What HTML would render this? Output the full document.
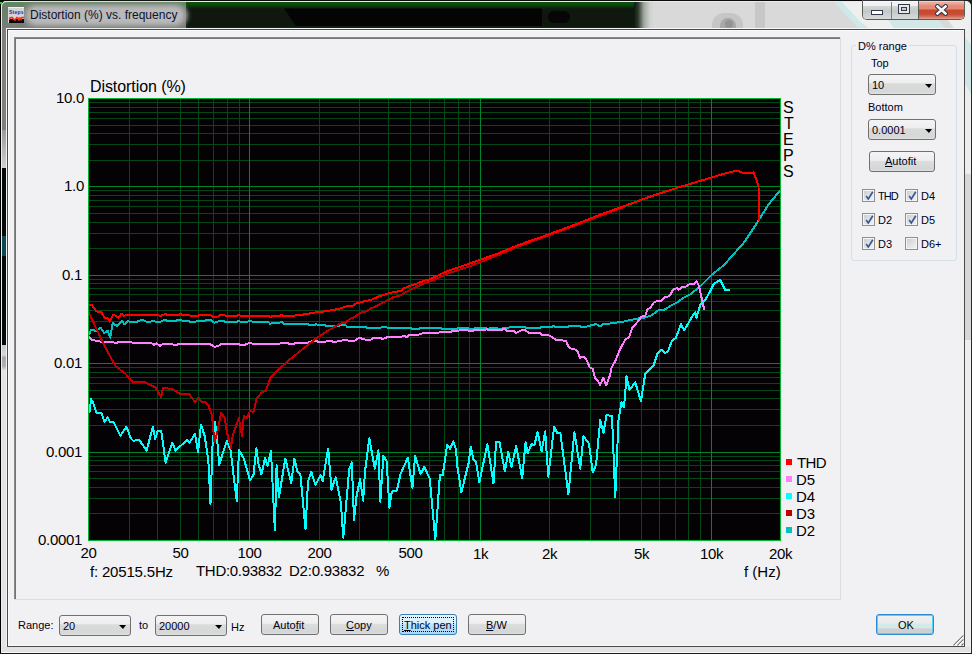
<!DOCTYPE html>
<html><head><meta charset="utf-8">
<style>
*{margin:0;padding:0;box-sizing:border-box}
html,body{width:972px;height:654px;overflow:hidden;background:#e9ebeb;font-family:"Liberation Sans",sans-serif}
.a{position:absolute}
.t{position:absolute;white-space:nowrap;line-height:1;color:#000}
.cl{font-size:15px}
.dl{font-size:11px;color:#000018}
.combo{position:absolute;border:1px solid #707070;border-radius:3px;background:linear-gradient(#f4f4f4 0,#eeeeee 42%,#d9dada 46%,#d6d7d7 90%,#e4e4e4 100%)}
.combo .arr{position:absolute;width:0;height:0;border-left:4px solid transparent;border-right:3.5px solid transparent;border-top:4px solid #000}
.btn{position:absolute;border:1px solid #707070;border-radius:3px;background:linear-gradient(#f4f4f4 0,#eeeeee 44%,#dcdddd 48%,#d4d5d5 90%,#e0e0e0 100%)}
.cb{position:absolute;width:13px;height:13px;border:1px solid #8e8f8f;box-shadow:inset 0 0 0 1px #f4f4f4;background:linear-gradient(135deg,#c8c9c9 0,#dedfdf 45%,#f4f4f4 100%)}
</style></head><body>
<!-- left frame -->
<div class="a" style="left:0;top:0;width:1px;height:654px;background:#000"></div>
<div class="a" style="left:1px;top:2px;width:1px;height:650px;background:#e8eeee"></div>
<div class="a" style="left:2px;top:28px;width:4px;height:102px;background:#7d807d"></div>
<div class="a" style="left:2px;top:130px;width:4px;height:38px;background:linear-gradient(#9a9a9a,#d0d0d0)"></div>
<div class="a" style="left:2px;top:168px;width:4px;height:177px;background:#060a08"></div>
<div class="a" style="left:2px;top:236px;width:4px;height:20px;background:#0a4a50"></div>
<div class="a" style="left:2px;top:345px;width:4px;height:25px;background:linear-gradient(#c8cccc 0,#d4d8d8 40%,#a8a8ac 50%,#b0b0b4 85%,#dcdede 100%)"></div>
<div class="a" style="left:2px;top:370px;width:4px;height:282px;background:#e3e5e5"></div>
<!-- right frame -->
<div class="a" style="left:965px;top:20px;width:6px;height:632px;background:#eceeee"></div>
<svg class="a" style="left:965px;top:38px" width="6" height="58"><polygon points="0,0 6,6 6,56 0,46" fill="#cfe6e6"/></svg>
<div class="a" style="left:965px;top:174px;width:6px;height:166px;background:#d6d8d8"></div>
<div class="a" style="left:971px;top:8px;width:1px;height:646px;background:#2a2a2a"></div>
<!-- bottom frame -->
<div class="a" style="left:2px;top:647px;width:968px;height:5px;background:#e0e2e2"></div>
<div class="a" style="left:2px;top:652px;width:968px;height:1px;background:#fafafa"></div>
<div class="a" style="left:0;top:653px;width:972px;height:1px;background:#1a1a1a"></div>

<!-- title bar -->
<div class="a" style="left:0;top:0;width:972px;height:1px;background:#0a0a0a"></div>
<div class="a" style="left:2px;top:1px;width:966px;height:1px;background:#e2eeee"></div>
<div class="a" style="left:2px;top:2px;width:188px;height:26px;background:linear-gradient(#5f8a5f 0,#6a7e6a 25%,#7a7d7a 100%)"></div>
<div class="a" style="left:186px;top:2px;width:452px;height:26px;background:linear-gradient(#0f4f0f 0,#0a4a0a 10%,#0b3a0b 16%,#0f1f0f 24%,#0f170f 32%,#0f170f 90%,#0e2a0e 100%)"></div>
<svg class="a" style="left:280px;top:8px" width="270" height="20"><polygon points="4,0.5 261,0.5 262,2 262,18 16,18" fill="#040404"/></svg>
<div class="a" style="left:548px;top:11px;width:22px;height:12px;background:#060606;border-radius:6px"></div>
<div class="a" style="left:634px;top:2px;width:20px;height:26px;background:linear-gradient(90deg,#111811 0,#2a3a2a 20%,#a0a8a0 50%,#cfd2cf 80%,#d8d9d8 100%)"></div>
<div class="a" style="left:654px;top:2px;width:310px;height:26px;background:#d8d9d8"></div>
<div class="a" style="left:712px;top:13px;width:31px;height:15px;background:#c6c6c6;border-radius:12px 12px 0 0"></div>
<div class="a" style="left:720px;top:18px;width:16px;height:10px;background:#a8a8a8;border-radius:8px 8px 0 0"></div>
<div class="a" style="left:725px;top:20px;width:8px;height:8px;background:#949494;border-radius:4px"></div>
<div class="a" style="left:755px;top:2px;width:10px;height:26px;background:#c6c7c6"></div>
<svg class="a" style="left:820px;top:2px" width="150" height="26"><polygon points="14,0 150,0 150,26 48,26" fill="#eef0f0"/><polygon points="14,0 22,0 46,26 38,26" fill="#cfe8e8"/><polygon points="68,18 118,18 124,26 74,26" fill="#d2e8e8"/><polygon points="118,18 128,18 134,26 124,26" fill="#d8dada"/></svg>
<!-- title glow -->
<div class="a" style="left:22px;top:4px;width:166px;height:23px;border-radius:11px;background:#8e908e;filter:blur(2px)"></div>
<div class="a" style="left:27px;top:6px;width:157px;height:19px;border-radius:9px;background:#b8b9b8;filter:blur(2px)"></div>
<!-- icon -->
<div class="a" style="left:8px;top:7px;width:16px;height:16px;background:#d4d4d6;border-top:1px solid #f2f2f2"></div>
<div class="t" style="left:9px;top:10px;font-size:5px;color:#2a2a9a;font-weight:bold;letter-spacing:0.2px">Steps</div>
<div class="a" style="left:9px;top:19px;width:15px;height:4px;background:#0a0a0a"></div>
<svg class="a" style="left:9px;top:16px" width="15" height="5"><path d="M0 4 L1 2 L3 1.5 L5 3.5 L6 4 L8 1.5 L9 2 L10 4 L11 2 L12 3.5 L13 1.5 L15 1.5" stroke="#ff2a10" stroke-width="1.6" fill="none"/></svg>
<div class="t" style="left:30px;top:9px;font-size:12px;color:#101030">Distortion (%) vs. frequency</div>
<!-- caption buttons -->
<div class="a" style="left:862px;top:0;width:103px;height:20px;border:1px solid #5a5a5a;border-top:none;border-radius:0 0 5px 5px;overflow:hidden">
  <div class="a" style="left:0;top:0;width:28px;height:19px;background:linear-gradient(#f2f2f4 0,#f0f0f2 30%,#d4d6d6 34%,#c4c8c8 60%,#d0d2d2 80%,#d8dada 100%)"></div>
  <div class="a" style="left:28px;top:0;width:1px;height:19px;background:#808080"></div>
  <div class="a" style="left:29px;top:0;width:26px;height:19px;background:linear-gradient(#f2f2f4 0,#f0f0f2 30%,#d4d6d6 34%,#c4c8c8 60%,#d0d2d2 80%,#d8dada 100%)"></div>
  <div class="a" style="left:55px;top:0;width:1px;height:19px;background:#5a5a5a"></div>
  <div class="a" style="left:56px;top:0;width:46px;height:19px;background:linear-gradient(#eab4a4 0,#e9a898 20%,#e68a78 30%,#e48870 48%,#c84830 52%,#c84c34 75%,#d07a68 90%,#eca090 100%)"></div>
  <div class="a" style="left:8px;top:10px;width:12px;height:5px;border:1px solid #33384a;background:#fff"></div>
  <div class="a" style="left:35px;top:4px;width:12px;height:10px;border:1px solid #33384a;background:#e8e8e8"><div class="a" style="left:2px;top:2px;width:6px;height:4px;border:1px solid #33384a;background:#ccc"></div></div>
  <svg class="a" style="left:72px;top:4px" width="13" height="12"><path d="M2.5 2.5 L10.5 9.5 M10.5 2.5 L2.5 9.5" stroke="#2e3444" stroke-width="4.6" stroke-linecap="square"/><path d="M2.5 2.5 L10.5 9.5 M10.5 2.5 L2.5 9.5" stroke="#f6f6f6" stroke-width="2.6" stroke-linecap="square"/></svg>
  <div class="a" style="left:0;top:0;width:103px;height:1px;background:#303438"></div>
  <div class="a" style="left:0;top:1px;width:55px;height:1px;background:#fafafa"></div>
  <div class="a" style="left:56px;top:1px;width:46px;height:1px;background:#f6d0c0"></div>
</div>

<!-- client area -->
<div class="a" style="left:6px;top:28px;width:959px;height:1px;background:rgba(255,255,255,0.65)"></div>
<div class="a" style="left:6px;top:28px;width:1px;height:619px;background:#f4f6f6"></div>
<div class="a" style="left:7px;top:29px;width:958px;height:618px;background:#4a4a4a"></div>
<div class="a" style="left:8px;top:30px;width:956px;height:616px;background:#fbfbfd"></div>
<div class="a" style="left:9px;top:31px;width:955px;height:614px;background:#f1f0f3"></div>

<!-- chart panel (sunken) -->
<div class="a" style="left:14px;top:37px;width:827px;height:563px;background:#dcdedd"></div>
<div class="a" style="left:14px;top:37px;width:826px;height:562px;background:#8a8a8a"></div>
<div class="a" style="left:15px;top:38px;width:825px;height:561px;background:#747474"></div>
<div class="a" style="left:16px;top:39px;width:824px;height:560px;background:#f1f0f3"></div>

<svg width="972" height="654" style="position:absolute;left:0;top:0">
<defs><clipPath id="clip"><rect x="89" y="99" width="691" height="441"/></clipPath></defs>
<g shape-rendering="crispEdges"><rect x="88" y="98" width="693" height="443" fill="#050206"/><rect x="88" y="160" width="692" height="1" fill="#034816"/><rect x="88" y="144" width="692" height="1" fill="#034816"/><rect x="88" y="133" width="692" height="1" fill="#034816"/><rect x="88" y="125" width="692" height="1" fill="#034816"/><rect x="88" y="118" width="692" height="1" fill="#034816"/><rect x="88" y="112" width="692" height="1" fill="#034816"/><rect x="88" y="107" width="692" height="1" fill="#034816"/><rect x="88" y="102" width="692" height="1" fill="#034816"/><rect x="88" y="248" width="692" height="1" fill="#034816"/><rect x="88" y="233" width="692" height="1" fill="#034816"/><rect x="88" y="222" width="692" height="1" fill="#034816"/><rect x="88" y="213" width="692" height="1" fill="#034816"/><rect x="88" y="206" width="692" height="1" fill="#034816"/><rect x="88" y="200" width="692" height="1" fill="#034816"/><rect x="88" y="195" width="692" height="1" fill="#034816"/><rect x="88" y="190" width="692" height="1" fill="#034816"/><rect x="88" y="337" width="692" height="1" fill="#034816"/><rect x="88" y="321" width="692" height="1" fill="#034816"/><rect x="88" y="310" width="692" height="1" fill="#034816"/><rect x="88" y="301" width="692" height="1" fill="#034816"/><rect x="88" y="294" width="692" height="1" fill="#034816"/><rect x="88" y="288" width="692" height="1" fill="#034816"/><rect x="88" y="283" width="692" height="1" fill="#034816"/><rect x="88" y="279" width="692" height="1" fill="#034816"/><rect x="88" y="425" width="692" height="1" fill="#034816"/><rect x="88" y="409" width="692" height="1" fill="#034816"/><rect x="88" y="398" width="692" height="1" fill="#034816"/><rect x="88" y="390" width="692" height="1" fill="#034816"/><rect x="88" y="383" width="692" height="1" fill="#034816"/><rect x="88" y="377" width="692" height="1" fill="#034816"/><rect x="88" y="372" width="692" height="1" fill="#034816"/><rect x="88" y="367" width="692" height="1" fill="#034816"/><rect x="88" y="513" width="692" height="1" fill="#034816"/><rect x="88" y="498" width="692" height="1" fill="#034816"/><rect x="88" y="487" width="692" height="1" fill="#034816"/><rect x="88" y="478" width="692" height="1" fill="#034816"/><rect x="88" y="471" width="692" height="1" fill="#034816"/><rect x="88" y="465" width="692" height="1" fill="#034816"/><rect x="88" y="460" width="692" height="1" fill="#034816"/><rect x="88" y="456" width="692" height="1" fill="#034816"/><rect x="129" y="98" width="1" height="442" fill="#034816"/><rect x="157" y="98" width="1" height="442" fill="#034816"/><rect x="180" y="98" width="1" height="442" fill="#034816"/><rect x="198" y="98" width="1" height="442" fill="#034816"/><rect x="213" y="98" width="1" height="442" fill="#034816"/><rect x="227" y="98" width="1" height="442" fill="#034816"/><rect x="239" y="98" width="1" height="442" fill="#034816"/><rect x="319" y="98" width="1" height="442" fill="#034816"/><rect x="359" y="98" width="1" height="442" fill="#034816"/><rect x="388" y="98" width="1" height="442" fill="#034816"/><rect x="410" y="98" width="1" height="442" fill="#034816"/><rect x="429" y="98" width="1" height="442" fill="#034816"/><rect x="444" y="98" width="1" height="442" fill="#034816"/><rect x="458" y="98" width="1" height="442" fill="#034816"/><rect x="469" y="98" width="1" height="442" fill="#034816"/><rect x="549" y="98" width="1" height="442" fill="#034816"/><rect x="590" y="98" width="1" height="442" fill="#034816"/><rect x="619" y="98" width="1" height="442" fill="#034816"/><rect x="641" y="98" width="1" height="442" fill="#034816"/><rect x="659" y="98" width="1" height="442" fill="#034816"/><rect x="675" y="98" width="1" height="442" fill="#034816"/><rect x="688" y="98" width="1" height="442" fill="#034816"/><rect x="700" y="98" width="1" height="442" fill="#034816"/><rect x="88" y="186" width="692" height="1" fill="#00852a"/><rect x="88" y="275" width="692" height="1" fill="#00852a"/><rect x="88" y="363" width="692" height="1" fill="#00852a"/><rect x="88" y="452" width="692" height="1" fill="#00852a"/><rect x="249" y="98" width="1" height="442" fill="#00852a"/><rect x="480" y="98" width="1" height="442" fill="#00852a"/><rect x="711" y="98" width="1" height="442" fill="#00852a"/><rect x="88.5" y="98.5" width="692" height="442" fill="none" stroke="#00b432" stroke-width="1"/></g><g clip-path="url(#clip)" shape-rendering="crispEdges"><polyline points="89.2,334.4 91,329.9 96.1,330.8 100.7,327.6 104.3,333.1 107.6,330.8 110.3,337.7 112.6,323 117.2,326.2 121.8,320.7 124.5,324.4 127.7,321.1 131.9,322.1 137.4,321.6 142,319.6 147.5,322.1 153.9,321.1 157,322 160,322 165.1,319.6 167.4,321.1 175.7,321.1 177.6,319.9 181.3,319.9 183.1,321.1 188.7,321.1 190.6,322 195.2,322 196.6,321.1 204.4,321.1 206.3,319.9 210.5,319.9 214.2,322.7 216.5,322.2 219.3,321.1 223.9,321.1 225.7,322 236.9,322 238.7,320.8 240.6,322 247,322 250,320.8 252,321.5 268.1,321.5 270.4,324 272.2,322.9 279.6,322.9 281.5,321.6 284.3,324 308.3,324 309.3,325.2 314.8,325.2 316.2,323.8 318.1,325.2 325,325.2 325.9,326.1 337,326.1 340,325.6 344.9,324.4 347.3,326.9 365.7,326.9 367.5,328.1 380.4,328.1 382.2,326.5 385.9,326.5 387.7,328.1 410.9,328.1 412.8,329.3 418.3,329.3 420.1,327.7 430,327.8 441.1,327.8 442,329 456.9,329 457.8,327.8 467.5,327.8 468.4,329 473.5,329 474.4,328.5 480,327.8 485.6,327.8 487.4,329 491.1,327.8 496.7,327.8 497.6,329 502.2,329 503.1,327.8 520,326.9 525.5,326.9 526.1,328.1 540.2,328.1 541.4,326.9 551.8,326.9 553.3,325.7 554.8,326.9 568.3,326.9 569.5,325.7 579.9,325.7 581.1,326.9 586.6,326.9 587.9,325.7 593.4,325.3 594.6,324.4 597,324.4 598.9,325.9 601.3,325.7 603.8,323.7 610,323.5 622.9,321.7 632.1,319.7 639.8,318.2 644.3,317.7 652,315.1 658.1,310.5 664.2,309.8 671.9,304.9 676.5,302.9 682.6,298.3 690,294.5 699,287.5 711.5,275 724,265 744,242.5 756.5,223.75 769,203.75 779.5,191.25" fill="none" stroke="#00c0c0" stroke-width="2" stroke-linejoin="round" stroke-linecap="round"/><polyline points="89.2,337.2 92.4,340 102.5,342 113.5,342.2 115.4,343.2 119,342 131,342 133.7,343.4 141,342.7 151.1,342.7 153.9,345 156.6,343.4 160,345.8 162.8,344 172,344 173.9,345.2 176.7,345.2 178.5,344 210,344 214.6,347 219.3,345.4 221.1,344 238.7,344 240.6,345.2 244.3,345.2 246.1,344 250,342.8 253.7,344 279.6,344 280.6,342.8 288,342.8 288.9,344 294.4,344 295.4,342.8 308.3,342.8 310.2,341.6 316.7,340.9 318.5,342.1 325,342.1 326.9,340.9 331.5,340.9 333.3,342.1 340,340.9 344.9,339.9 349.8,340.9 354.7,340.7 359,337.9 363.8,339.1 366.9,339.9 370.6,339.7 373.6,337.9 380.4,337.9 382.8,339.1 387.7,337 401.1,337 403.6,335.8 406.6,337 409.7,334.8 418.3,334.8 420.7,333.6 430,332.7 438.8,332.7 439.7,331.8 450.8,331.8 451.8,330.8 458.7,330.8 460.1,329.7 467,329.7 468.4,330.8 473.5,330.8 474.4,329.7 485.6,329.7 486.9,328.7 487.9,329.7 502.2,329.7 504.1,328.5 506.4,330.8 513.8,330.8 516.1,333.1 518.4,331.8 520,330.8 524.3,329.6 528.6,332.6 540.2,332.6 542,335.1 548.7,335.4 551.8,336.9 556.7,340.3 565.9,340.6 568.3,346.7 571.4,348.9 574.4,348.9 577.5,351.6 579.9,357.7 584.2,356.5 587.3,361.4 589.7,367.5 592.8,368.7 595.2,378.5 597.6,380.3 600.1,385.2 603.2,377.9 606.2,385.2 610,375.4 611.5,367.9 615.3,361 619.9,349.5 625.2,339.6 629.1,337.3 632.1,328.1 638.2,321.2 641.3,316.6 645.1,315.9 647.4,309.8 650.5,307.5 653.5,302.9 658.1,300.6 661.9,300.6 664.2,297.5 669.6,296 673.4,289.1 677.2,288.3 678.7,289.9 682.6,286.5 686.4,286.5 688.7,284.5 694,283.75 696.5,281.25 699,286.25 704,308.75" fill="none" stroke="#ff80ff" stroke-width="2" stroke-linejoin="round" stroke-linecap="round"/><polyline points="89.5,412 91.1,399.2 92.9,402.2 96.6,413.2 99.6,412.6 101.4,413.2 104.5,421.8 107.6,417.5 110,421.8 113.7,422.4 120.4,435.8 126.5,426.7 130.8,438.3 133.2,440.7 139.3,440.1 146.7,450.5 152.8,426.7 155.2,438.9 157.7,431 161.3,431 165.6,462.7 172.4,442.6 175.4,450.5 187,440.1 189.5,442.6 195,434 198,452.3 201,424.6 204.7,436.2 208.3,460 210.5,503.75 212.6,443.6 215,421.6 217.5,443.6 219.25,465 223,452.5 226.75,441 230.5,450 236.75,501 239,450 244,459 250,480.4 253.4,475.4 256.4,448.5 258.4,463.6 261.4,474.5 265.1,457.7 267.6,466.1 271,451 273.5,503.1 274.9,530 276.6,465.3 278.9,497.2 285.3,458.6 291.2,482.9 294.5,458.6 297.1,471.2 300.4,474.5 305.5,529.2 308,481.3 311.3,472 315.5,484.6 320.6,475.4 322.6,481.3 328.2,448.5 331.5,489.7 335.7,477.1 340.8,502.3 343.3,537.6 349.2,469.5 351.8,462.2 354,520 356.4,497.1 360.1,478.7 363.2,500.7 365,471.4 369.3,438.3 374.8,468.6 378.4,450.3 380.3,501.7 383.4,455.8 386.7,461.3 389.4,508.1 391.8,491.6 396.8,490.6 400.5,474.1 407.8,457.6 412.4,487.9 415.1,455.8 420.6,474.1 424.3,466.8 429.8,478.7 435.3,540 439.9,475 442.7,475 447.2,444.8 450,448.8 453.3,441.4 456,449.4 457.4,466.8 461.4,492.2 468.7,462.8 470.7,446.7 473.4,459.5 476.1,462.1 479.4,482.2 487.4,444.1 493.5,483.5 496.1,442.1 499.5,442.1 504.8,471.5 508.2,452.1 511.5,466.8 516.2,446.1 522.2,478.2 525.6,442.1 527.6,453.4 531.6,444.1 534.3,445.4 537.6,432 541.6,451.4 545.2,431.4 548.3,476.8 554.1,426.7 557,432.7 560.3,432.7 568.4,494.2 574.4,432 580.25,468.75 583.5,436.25 589,443.75 592.75,472.5 596,465 600.25,420 603.5,432.5 606.5,415 612,416.25 615.25,497.5 618.5,420 621.5,402.5 624,407.5 626.5,376.25 629.5,390 635.25,382.5 641,401.25 645.25,373.75 651.2,367.9 653.5,365.6 657.3,354.1 661.2,349.5 665,353.3 668,351 671.9,341.1 675.7,338 681,324.3 684.1,330.4 688.7,322.8 691.5,317.5 695.25,312.5 696.5,317.5 700.25,305 705.25,300 711.5,288.75 714,283.75 720.25,280 725.25,290 729,290" fill="none" stroke="#00ffff" stroke-width="2" stroke-linejoin="round" stroke-linecap="round"/><polyline points="89,313 100.5,337.5 108,352.5 115.5,366 125.5,374 133,382 145.5,382.5 155.5,387.5 161,397 163,387.5 173,389.5 180.5,394 189,394 194.9,402 198.6,397.7 201.6,402 204.7,402 208.3,405 212,415.5 214.5,442.4 217.5,431.4 221.2,413 224.8,418 226.7,431.4 231,447.9 232.8,435 238.9,418 242,436.2 243.8,415.5 246.9,418 249.9,411.2 253.6,411.8 256.6,398.3 262.1,392.2 265.8,391 270.5,377.5 278,370 288,361 299,352 314.8,339.5 324.1,333 340,323.8 345.5,322.6 349.8,318.9 354.7,317.1 360.2,312.8 365.7,311.6 370.6,308.5 376.7,306.1 382.8,302.4 388.9,300 392.6,297.5 401.1,295.1 406,292 413.4,288.3 425.6,282.8 430,281.6 447.5,273.6 475,264.4 498,255.2 518.5,246.5 543.5,237.4 574,226 600,216 624,207" fill="none" stroke="#c00000" stroke-width="2" stroke-linejoin="round" stroke-linecap="round"/><polyline points="89.2,304.6 91.5,304.6 96.6,311.5 101.1,312 104.3,317.5 107.6,318.4 109.9,321.6 113.1,314.7 115.4,315.6 118.6,317.9 121.3,313.8 124.1,316.1 126.4,314.7 157.6,314.7 160,316.2 165.1,313.9 167.4,315 178.5,315 180.4,313.9 182.2,314.8 188.7,314.8 190.6,315.9 198,315.9 199.8,314.8 210,314.8 212.8,316.9 217.4,316.9 220.6,314.8 223.9,314.8 225.7,315.9 236.9,315.9 238.7,314.6 240.6,315.9 250,315.9 268.1,315.9 270.4,317.1 272.2,315.9 279.6,315.9 281.5,314.8 283.3,315.9 294.4,315.9 296.3,314.8 302.8,314.8 304.6,313.8 309.3,313.8 311.1,312.7 314.8,312.7 316.7,311.7 323.1,311.7 325,310.6 329.6,310.6 331.5,309.7 335.2,309.7 337,308.8 340,308.5 347.3,306.1 353.5,305.5 355.9,303.6 364.5,301.2 370.6,300 379.1,296.3 388.9,293.2 401.1,290.8 403.6,288.3 413.4,284.7 425.6,280.4 430,279.2 447.5,271 475,261.7 498,253.4 518.5,245 543.5,236.25 574,225 599,215 624,206.25 649,197 674,188.75 699,181.25 724,173.75 734,171.25 739,171.25 744,173.25 753.5,172.5 756,178.75 758.5,186.25 759,220" fill="none" stroke="#ff0000" stroke-width="2" stroke-linejoin="round" stroke-linecap="round"/></g>
</svg>

<!-- chart texts -->
<div class="t" style="left:90px;top:79px;font-size:16px;letter-spacing:-0.08px;font-weight:400;color:#000">Distortion (%)</div>
<div class="t" style="left:56px;top:90px;font-size:15px;letter-spacing:-0.3px;font-weight:400;color:#000">10.0</div>
<div class="t" style="left:64px;top:178px;font-size:15px;letter-spacing:-0.3px;font-weight:400;color:#000">1.0</div>
<div class="t" style="left:62px;top:267px;font-size:15px;letter-spacing:-0.3px;font-weight:400;color:#000">0.1</div>
<div class="t" style="left:54px;top:355px;font-size:15px;letter-spacing:-0.3px;font-weight:400;color:#000">0.01</div>
<div class="t" style="left:46px;top:444px;font-size:15px;letter-spacing:-0.3px;font-weight:400;color:#000">0.001</div>
<div class="t" style="left:38px;top:532px;font-size:15px;letter-spacing:-0.3px;font-weight:400;color:#000">0.0001</div>
<div class="t" style="left:80.5px;top:545px;font-size:15px;letter-spacing:-0.3px;font-weight:400;color:#000">20</div>
<div class="t" style="left:172.5px;top:545px;font-size:15px;letter-spacing:-0.3px;font-weight:400;color:#000">50</div>
<div class="t" style="left:237.5px;top:545px;font-size:15px;letter-spacing:-0.3px;font-weight:400;color:#000">100</div>
<div class="t" style="left:307.5px;top:545px;font-size:15px;letter-spacing:-0.3px;font-weight:400;color:#000">200</div>
<div class="t" style="left:398.5px;top:545px;font-size:15px;letter-spacing:-0.3px;font-weight:400;color:#000">500</div>
<div class="t" style="left:473px;top:546px;font-size:15px;letter-spacing:-0.3px;font-weight:400;color:#000">1k</div>
<div class="t" style="left:542px;top:546px;font-size:15px;letter-spacing:-0.3px;font-weight:400;color:#000">2k</div>
<div class="t" style="left:634px;top:546px;font-size:15px;letter-spacing:-0.3px;font-weight:400;color:#000">5k</div>
<div class="t" style="left:700px;top:546px;font-size:15px;letter-spacing:-0.3px;font-weight:400;color:#000">10k</div>
<div class="t" style="left:769px;top:546px;font-size:15px;letter-spacing:-0.3px;font-weight:400;color:#000">20k</div>
<div class="t" style="left:90px;top:564px;font-size:15px;letter-spacing:-0.18px;font-weight:400;color:#000">f: 20515.5Hz</div>
<div class="t" style="left:196px;top:563px;font-size:15px;letter-spacing:-0.3px;font-weight:400;color:#000">THD:0.93832</div>
<div class="t" style="left:289px;top:563px;font-size:15px;letter-spacing:-0.22px;font-weight:400;color:#000">D2:0.93832</div>
<div class="t" style="left:376px;top:563px;font-size:15px;letter-spacing:0px;font-weight:400;color:#000">%</div>
<div class="t" style="left:744px;top:564px;font-size:15px;letter-spacing:0px;font-weight:400;color:#000">f (Hz)</div>
<div class="t" style="left:783px;top:100px;font-size:16px;letter-spacing:0px;font-weight:400;color:#000">S</div>
<div class="t" style="left:784px;top:116px;font-size:16px;letter-spacing:0px;font-weight:400;color:#000">T</div>
<div class="t" style="left:783px;top:132px;font-size:16px;letter-spacing:0px;font-weight:400;color:#000">E</div>
<div class="t" style="left:783px;top:148px;font-size:16px;letter-spacing:0px;font-weight:400;color:#000">P</div>
<div class="t" style="left:783px;top:164px;font-size:16px;letter-spacing:0px;font-weight:400;color:#000">S</div>
<div class="t" style="left:797px;top:455px;font-size:15px;letter-spacing:-0.6px;font-weight:400;color:#000">THD</div>
<div class="t" style="left:796px;top:472px;font-size:15px;letter-spacing:0px;font-weight:400;color:#000">D5</div>
<div class="t" style="left:796px;top:489px;font-size:15px;letter-spacing:0px;font-weight:400;color:#000">D4</div>
<div class="t" style="left:796px;top:506px;font-size:15px;letter-spacing:0px;font-weight:400;color:#000">D3</div>
<div class="t" style="left:796px;top:523px;font-size:15px;letter-spacing:0px;font-weight:400;color:#000">D2</div>
<div class="a" style="left:786px;top:459px;width:6px;height:6px;background:#ff0000"></div>
<div class="a" style="left:786px;top:476px;width:6px;height:6px;background:#ff80ff"></div>
<div class="a" style="left:786px;top:493px;width:6px;height:6px;background:#00ffff"></div>
<div class="a" style="left:786px;top:510px;width:6px;height:6px;background:#c00000"></div>
<div class="a" style="left:786px;top:527px;width:6px;height:6px;background:#00c0c0"></div>
<!-- checkboxes -->
<div class="cb" style="left:862px;top:189px"><svg class="a" style="left:1px;top:0px" width="11" height="11"><path d="M2.2 6 L4.3 9 L8.8 1.8" stroke="#3a5896" stroke-width="1.7" fill="none"/></svg></div><div class="t dl" style="left:878px;top:191px;letter-spacing:-0.9px">THD</div>
<div class="cb" style="left:905px;top:189px"><svg class="a" style="left:1px;top:0px" width="11" height="11"><path d="M2.2 6 L4.3 9 L8.8 1.8" stroke="#3a5896" stroke-width="1.7" fill="none"/></svg></div><div class="t dl" style="left:921px;top:191px">D4</div>
<div class="cb" style="left:862px;top:213px"><svg class="a" style="left:1px;top:0px" width="11" height="11"><path d="M2.2 6 L4.3 9 L8.8 1.8" stroke="#3a5896" stroke-width="1.7" fill="none"/></svg></div><div class="t dl" style="left:878px;top:215px">D2</div>
<div class="cb" style="left:905px;top:213px"><svg class="a" style="left:1px;top:0px" width="11" height="11"><path d="M2.2 6 L4.3 9 L8.8 1.8" stroke="#3a5896" stroke-width="1.7" fill="none"/></svg></div><div class="t dl" style="left:921px;top:215px">D5</div>
<div class="cb" style="left:862px;top:237px"><svg class="a" style="left:1px;top:0px" width="11" height="11"><path d="M2.2 6 L4.3 9 L8.8 1.8" stroke="#3a5896" stroke-width="1.7" fill="none"/></svg></div><div class="t dl" style="left:878px;top:239px">D3</div>
<div class="cb" style="left:905px;top:237px"></div><div class="t dl" style="left:921px;top:239px">D6+</div>

<!-- right group -->
<div class="a" style="left:851px;top:45px;width:106px;height:216px;border:1px solid #d5dfe5;border-radius:3px"></div>
<div class="t dl" style="left:856px;top:41px;background:#f1f0f3;padding:0 2px">D% range</div>
<div class="t dl" style="left:871px;top:58px">Top</div>
<div class="combo" style="left:868px;top:74px;width:68px;height:21px"><span class="t dl" style="left:3px;top:5px">10</span><span class="arr" style="left:56px;top:9px"></span></div>
<div class="t dl" style="left:868px;top:102px">Bottom</div>
<div class="combo" style="left:868px;top:119px;width:68px;height:21px"><span class="t dl" style="left:3px;top:5px">0.0001</span><span class="arr" style="left:56px;top:9px"></span></div>
<div class="btn" style="left:869px;top:151px;width:66px;height:21px"><span class="t dl" style="left:15px;top:4px"><u>A</u>utofit</span></div>

<!-- bottom -->
<div class="t dl" style="left:18px;top:620px">Range:</div>
<div class="combo" style="left:59px;top:615px;width:72px;height:21px"><span class="t dl" style="left:3px;top:5px">20</span><span class="arr" style="left:59px;top:9px"></span></div>
<div class="t dl" style="left:139px;top:620px">to</div>
<div class="combo" style="left:155px;top:615px;width:72px;height:21px"><span class="t dl" style="left:3px;top:5px">20000</span><span class="arr" style="left:59px;top:9px"></span></div>
<div class="t dl" style="left:231px;top:622px">Hz</div>
<div class="btn" style="left:261px;top:614px;width:58px;height:21px"><span class="t dl" style="left:11px;top:5px">Auto<u>f</u>it</span></div>
<div class="btn" style="left:330px;top:614px;width:58px;height:21px"><span class="t dl" style="left:15px;top:5px"><u>C</u>opy</span></div>
<div class="btn" style="left:399px;top:614px;width:58px;height:21px;border-color:#3c7fb1;background:linear-gradient(#e5f4fc 0,#d9effa 45%,#bde5fb 50%,#a7d9f5 100%)"><div class="a" style="left:2px;top:2px;width:52px;height:15px;border:1px dotted #000"></div><span class="t dl" style="left:4px;top:5px"><u>T</u>hick pen</span></div>
<div class="btn" style="left:468px;top:614px;width:58px;height:21px"><span class="t dl" style="left:17px;top:5px"><u>B</u>/W</span></div>
<div class="btn" style="left:876px;top:614px;width:58px;height:21px;border-color:#2a8ad4;box-shadow:inset 0 0 0 1px #5ad0f6;background:linear-gradient(#f2f2f2 0,#eaeaea 40%,#d4eaea 50%,#d4eaea 70%,#cfcfcf 72%,#d0d0d0 100%)"><span class="t dl" style="left:21px;top:5px">OK</span></div>
<svg class="a" style="left:952px;top:634px" width="12" height="12"><path d="M1.5 11.5 L11.5 1.5 M5.5 11.5 L11.5 5.5 M9.5 11.5 L11.5 9.5" stroke="#7a7a7a" stroke-width="1.2"/><path d="M2.5 11.5 L11.5 2.5 M6.5 11.5 L11.5 6.5" stroke="#ffffff" stroke-width="1"/></svg>
<svg class="a" style="left:0;top:0" width="10" height="10"><path d="M0 0 H8 V1 H6 A5 5 0 0 0 1 6 V10 H0 Z" fill="#050505"/><path d="M7 1.5 H6.5 A5 5 0 0 0 1.5 6.5 V10" stroke="#dfeeee" stroke-width="1" fill="none"/><rect x="0" y="2" width="2" height="2" fill="#10e010"/></svg>
<svg class="a" style="left:962px;top:0" width="10" height="10"><path d="M10 0 H2 V1 H4 A5 5 0 0 1 9 6 V10 H10 Z" fill="#202020"/><path d="M3 1.5 H3.5 A5 5 0 0 1 8.5 6.5 V10" stroke="#e8eeee" stroke-width="1" fill="none"/></svg>
</body></html>
